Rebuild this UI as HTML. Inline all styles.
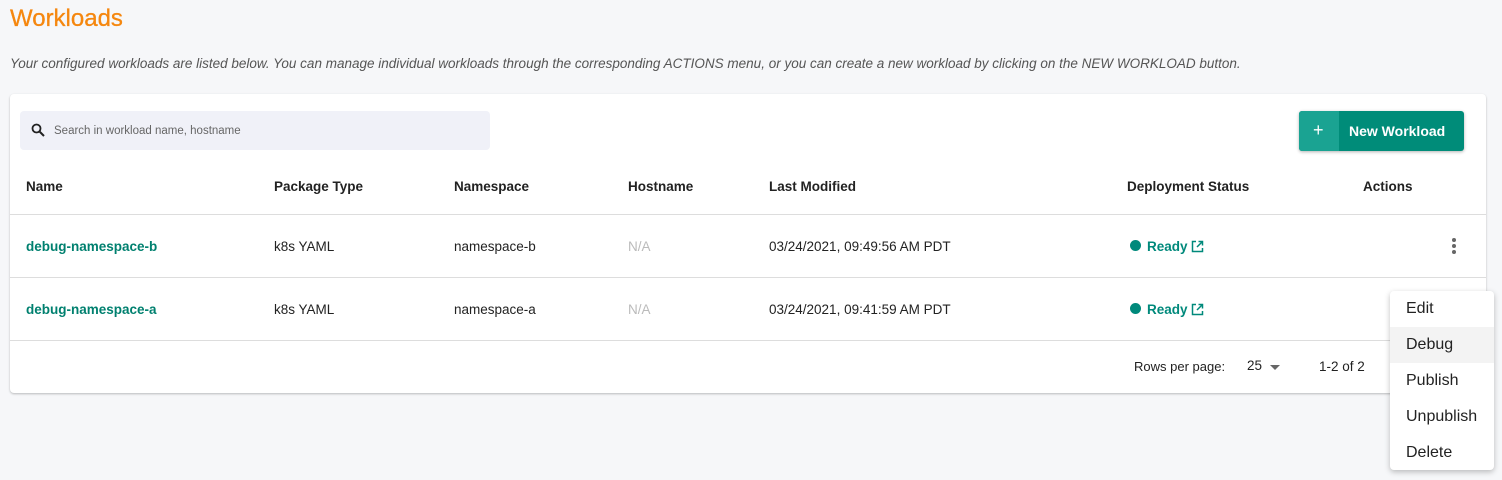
<!DOCTYPE html>
<html><head><style>
*{margin:0;padding:0;box-sizing:border-box}
body{width:1502px;height:480px;background:#f6f7f9;font-family:"Liberation Sans",Arial,sans-serif;position:relative;overflow:hidden;color:#222}
.a{position:absolute;white-space:nowrap}
h1{position:absolute;left:10px;top:5px;font-size:24px;font-weight:400;color:#f5870f;-webkit-text-stroke:0.3px #f5870f}
.desc{left:10px;top:56px;font-size:13.5px;font-style:italic;color:#555}
.card{position:absolute;left:10px;top:94px;width:1476px;height:299px;background:#fff;border-radius:4px;box-shadow:0 1px 2px rgba(0,0,0,.25)}
.search{position:absolute;left:10px;top:17px;width:470px;height:39px;background:#f0f1f8;border-radius:4px}
.btn{position:absolute;left:1289px;top:17px;width:165px;height:40px;background:#008c79;border-radius:3px;box-shadow:0 1px 3px rgba(0,0,0,.3);color:#fff;font-size:14px;font-weight:bold}
.th{font-size:13.5px;font-weight:bold;color:#222;top:85px}
.line{position:absolute;left:0;width:1476px;height:1px;background:#ddd}
.td{font-size:13.5px;color:#222}
.lk{color:#00806f;font-weight:bold}
.rd{color:#00897b;font-weight:bold;font-size:13.5px}
.menu{position:absolute;left:1390px;top:291px;width:104px;height:179px;background:#fff;border-radius:4px;box-shadow:0 2px 6px rgba(0,0,0,.25)}
.mi{position:absolute;left:16px;font-size:16px;color:#222}
</style></head><body>
<h1>Workloads</h1>
<div class="a desc">Your configured workloads are listed below. You can manage individual workloads through the corresponding ACTIONS menu, or you can create a new workload by clicking on the NEW WORKLOAD button.</div>
<div class="card">
 <div class="search">
  <svg class="a" style="left:11px;top:12px" width="14" height="14" viewBox="0 0 14 14"><circle cx="5.5" cy="5.5" r="4" fill="none" stroke="#222" stroke-width="1.8"/><path d="M8.5 8.5L13 13" stroke="#222" stroke-width="2"/></svg>
  <div class="a" style="left:34px;top:14px;font-size:11.5px;color:#666">Search in workload name, hostname</div>
 </div>
 <div class="btn"><div class="a" style="left:0;top:0;width:40px;height:40px;background:#1aa392;border-radius:3px 0 0 3px"></div><div class="a" style="left:14px;top:9px;font-weight:normal;font-size:18px">+</div><div class="a" style="left:50px;top:12px">New Workload</div></div>
 <div class="a th" style="left:16px">Name</div>
 <div class="a th" style="left:264px">Package Type</div>
 <div class="a th" style="left:444px">Namespace</div>
 <div class="a th" style="left:618px">Hostname</div>
 <div class="a th" style="left:759px">Last Modified</div>
 <div class="a th" style="left:1117px">Deployment Status</div>
 <div class="a th" style="left:1353px">Actions</div>
 <div class="line" style="top:120px"></div>
 <div class="line" style="top:183px"></div>
 <div class="line" style="top:246px"></div>
 <div class="a td lk" style="left:16px;top:145px">debug-namespace-b</div>
 <div class="a td" style="left:264px;top:145px">k8s YAML</div>
 <div class="a td" style="left:444px;top:145px">namespace-b</div>
 <div class="a td" style="left:618px;top:145px;color:#bbb">N/A</div>
 <div class="a td" style="left:759px;top:145px">03/24/2021, 09:49:56 AM PDT</div>
 <div class="a" style="left:1120px;top:146px;width:11px;height:11px;border-radius:50%;background:#00897b"></div>
 <div class="a rd" style="left:1137px;top:145px">Ready</div>
 <svg class="a" style="left:1181px;top:146px" width="13" height="13" viewBox="0 0 13 13"><path d="M5 1.5H1.5V11.5H11.5V8M7.5 1.5H11.5V5.5M11.5 1.5L6 7" fill="none" stroke="#00897b" stroke-width="1.5"/></svg>
 <div class="a" style="left:1442px;top:144px;width:4px;height:4px;border-radius:50%;background:#666;box-shadow:0 6px 0 #666,0 12px 0 #666"></div>
 <div class="a td lk" style="left:16px;top:208px">debug-namespace-a</div>
 <div class="a td" style="left:264px;top:208px">k8s YAML</div>
 <div class="a td" style="left:444px;top:208px">namespace-a</div>
 <div class="a td" style="left:618px;top:208px;color:#bbb">N/A</div>
 <div class="a td" style="left:759px;top:208px">03/24/2021, 09:41:59 AM PDT</div>
 <div class="a" style="left:1120px;top:209px;width:11px;height:11px;border-radius:50%;background:#00897b"></div>
 <div class="a rd" style="left:1137px;top:208px">Ready</div>
 <svg class="a" style="left:1181px;top:209px" width="13" height="13" viewBox="0 0 13 13"><path d="M5 1.5H1.5V11.5H11.5V8M7.5 1.5H11.5V5.5M11.5 1.5L6 7" fill="none" stroke="#00897b" stroke-width="1.5"/></svg>
 <div class="a" style="left:1124px;top:265px;font-size:13px">Rows per page:</div>
 <div class="a" style="left:1237px;top:264px;font-size:13.5px">25</div>
 <div class="a" style="left:1260px;top:271px;width:0;height:0;border-left:5px solid transparent;border-right:5px solid transparent;border-top:5px solid #666"></div>
 <div class="a" style="left:1309px;top:265px;font-size:13.5px">1-2 of 2</div>
</div>
<div class="menu">
 <div class="a" style="left:0;top:36px;width:104px;height:36px;background:#f3f3f3"></div>
 <div class="mi" style="top:9px">Edit</div>
 <div class="mi" style="top:45px">Debug</div>
 <div class="mi" style="top:81px">Publish</div>
 <div class="mi" style="top:117px">Unpublish</div>
 <div class="mi" style="top:153px">Delete</div>
</div>
</body></html>
